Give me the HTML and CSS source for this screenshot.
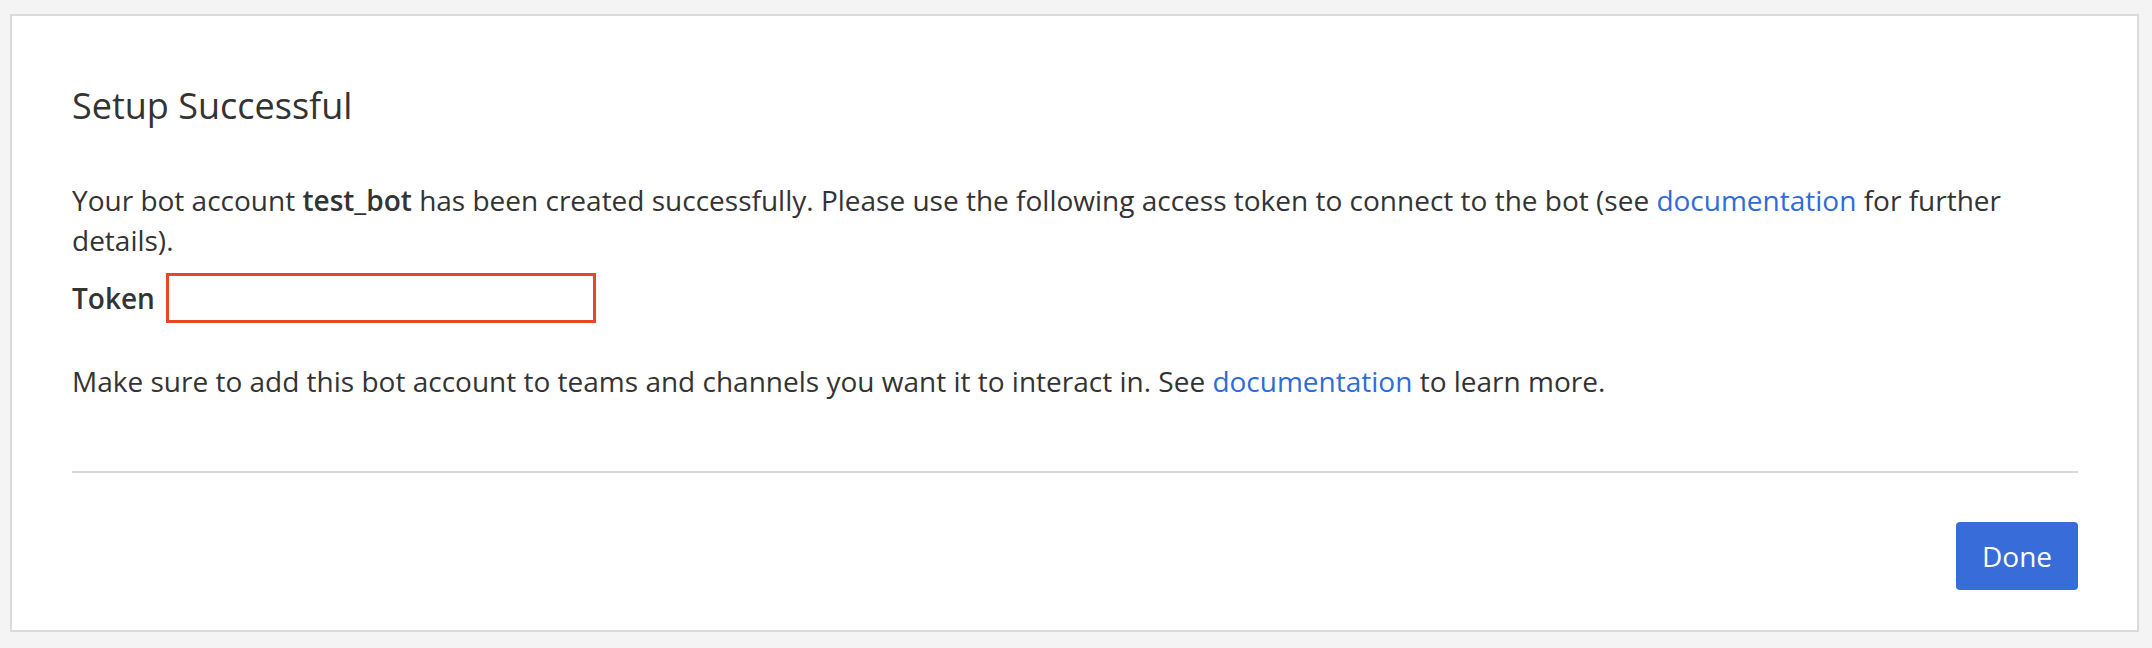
FILE: index.html
```html
<!DOCTYPE html>
<html lang="en">
<head>
<meta charset="utf-8">
<title>Setup Successful</title>
<link rel="stylesheet" href="styles.css">
</head>
<body>
<div class="card">
  <h1 class="title">Setup Successful</h1>
  <p class="text">Your bot account <strong>test_bot</strong> has been created successfully. Please use the following access token to connect to the bot (see <a href="#" class="link">documentation</a> for further details).</p>
  <div class="token-row">
    <span class="token-label">Token</span>
    <span class="token-box"></span>
  </div>
  <p class="text note">Make sure to add this bot account to teams and channels you want it to interact in. See <a href="#" class="link">documentation</a> to learn more.</p>
  <hr class="divider">
  <div class="footer">
    <button class="btn">Done</button>
  </div>
</div>
</body>
</html>
```

FILE: styles.css
```css
html, body {
  margin: 0;
  padding: 0;
  background: #f4f4f4;
}
body {
  padding: 14px 13px 16px 10px;
  font-family: "Open Sans", "Noto Sans", sans-serif;
  color: #333333;
}
.card {
  background: #ffffff;
  border: 2px solid #dadada;
  padding: 70px 59px 40px 60px;
  box-sizing: border-box;
  height: 618px;
}
.title {
  margin: 0;
  font-size: 36px;
  line-height: 40px;
  font-weight: 400;
  color: #333333;
}
.text {
  margin: 54px 0 0 0;
  font-size: 28px;
  line-height: 40px;
}
.text strong {
  font-weight: 600;
}
.link {
  color: #2f6bd9;
  text-decoration: none;
}
.token-row {
  display: flex;
  align-items: center;
  gap: 11px;
  margin-top: 13px;
}
.token-label {
  font-size: 28px;
  line-height: 40px;
  font-weight: 600;
}
.token-box {
  width: 430px;
  height: 50px;
  box-sizing: border-box;
  border: 3px solid #ea4429;
}
.note {
  margin-top: 38px;
}
.divider {
  margin: 70px 0 0 0;
  border: 0;
  height: 2px;
  background: #d8d8d8;
}
.footer {
  display: flex;
  justify-content: flex-end;
  margin-top: 49px;
}
.btn {
  font-family: "Open Sans", "Noto Sans", sans-serif;
  font-size: 28px;
  color: #ffffff;
  background: #386cd9;
  border: 0;
  border-radius: 4px;
  width: 122px;
  height: 68px;
  padding: 0;
}
```
